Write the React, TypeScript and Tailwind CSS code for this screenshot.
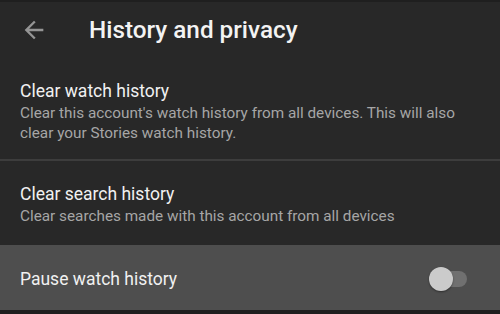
import React from "react";

export default function App() {
  return (
    <div
      className="w-[500px] h-[314px] overflow-hidden bg-[#282828] flex flex-col"
      style={{ fontFamily: "Roboto, 'Noto Sans', sans-serif" }}
    >
      <div className="h-[60px] shrink-0 flex items-center border-t-[2px] border-[#1f1f1f] pb-[2px]">
        <div className="w-[89px] flex items-center pl-[20px]">
          <svg width="28" height="28" viewBox="0 0 24 24" className="text-[#959595]">
            <path d="M20 11H7.83l5.59-5.59L12 4l-8 8 8 8 1.41-1.41L7.83 13H20v-2z" fill="currentColor" />
          </svg>
        </div>
        <div className="text-[24.3px] leading-[30px] font-medium text-[#f3f3f3]">History and privacy</div>
      </div>
      <div className="pl-[20px] pr-[20px] pt-[19px] pb-[16px]">
        <div className="text-[17.5px] leading-[24px] text-[#f1f1f1]">Clear watch history</div>
        <div className="text-[15.3px] leading-[20px] text-[#a6a6a6]">
          Clear this account's watch history from all devices. This will also clear your Stories watch history.
        </div>
      </div>
      <div className="h-[2px] shrink-0 bg-[#3d3d3d]" />
      <div className="pl-[20px] pr-[20px] pt-[21px] pb-[19px]">
        <div className="text-[17.5px] leading-[24px] text-[#f1f1f1]">Clear search history</div>
        <div className="text-[15.3px] leading-[20px] text-[#a6a6a6]">
          Clear searches made with this account from all devices
        </div>
      </div>
      <div className="h-[65px] shrink-0 bg-[#4e4e4e] flex items-center justify-between pl-[20px] pr-[33px] pt-[3px]">
        <div className="text-[17.5px] leading-[24px] text-[#f1f1f1]">Pause watch history</div>
        <div className="relative w-[38px] h-[24px]">
          <div className="absolute left-[8px] top-[4px] w-[30px] h-[16px] rounded-full bg-[#707070]" />
          <div className="absolute left-0 top-0 w-[24px] h-[24px] rounded-full bg-[#cbcbcb] shadow-[0_1px_2px_rgba(0,0,0,0.4)]" />
        </div>
      </div>
      <div className="flex-1 bg-[#1f1f1f]" />
    </div>
  );
}
